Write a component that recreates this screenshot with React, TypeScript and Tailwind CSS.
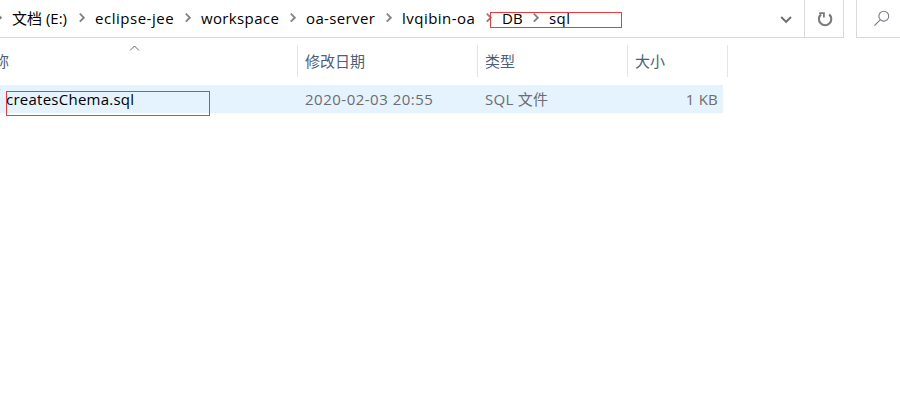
type Crumb = { label: string; box: string };

const crumbs: Crumb[] = [
  { label: '文档 (E:)', box: 'w-[56px]' },
  { label: 'eclipse-jee', box: 'w-[79px] tracking-[0.52px]' },
  { label: 'workspace', box: 'w-[78px] tracking-[0.36px]' },
  { label: 'oa-server', box: 'w-[69px] tracking-[0.36px]' },
  { label: 'lvqibin-oa', box: 'w-[73px] tracking-[0.48px]' },
  { label: 'DB', box: 'w-[20px]' },
  { label: 'sql', box: 'w-[21px] tracking-[0.4px]' },
];

function Separator() {
  return (
    <svg className="h-[38px] w-[27px] shrink-0" viewBox="0 0 27 38" fill="none" stroke="#828282" strokeWidth="1.9">
      <path d="M11.8 13.7l4 4-4 4" />
    </svg>
  );
}

function AddressBar() {
  return (
    <div className="flex h-[38px]">
      <div className="relative flex w-[805px] border-r border-b border-[#d9d9d9]">
        <svg className="h-[38px] w-[12px] shrink-0" viewBox="0 0 12 38" fill="none" stroke="#828282" strokeWidth="1.9">
          <path d="M-3.2 13.7l4 4-4 4" />
        </svg>
        {crumbs.map((c, i) => (
          <div key={c.label} className="flex shrink-0">
            {i > 0 && <Separator />}
            <span className={`shrink-0 text-[15px] leading-[36px] text-black ${c.box}`}>{c.label}</span>
          </div>
        ))}
        <div className="absolute top-[12px] left-[490px] h-[16px] w-[132px] border border-[#f03a3a]" />
        <svg className="mr-[11px] ml-auto h-[38px] w-[14px]" viewBox="0 0 14 38" fill="none" stroke="#6e6e6e" strokeWidth="2">
          <path d="M2.2 17l4.9 4.9 4.9-4.9" />
        </svg>
      </div>
      <div className="w-[39px] border-r border-b border-[#d9d9d9]">
        <svg className="h-[37px] w-[38px]" viewBox="0 0 38 37" fill="none" stroke="#7b7b7b" strokeWidth="2.1">
          <path d="M16 14.4a6.2 6.2 0 1 0 8.2 0" />
          <path d="M14.2 13.1h4.7v4.4" strokeWidth="1.8" />
        </svg>
      </div>
      <div className="ml-[12px] flex-1 border-b border-l border-[#d9d9d9]">
        <svg className="h-[37px] w-[43px]" viewBox="0 0 43 37" fill="none" stroke="#747c86" strokeWidth="1.1">
          <circle cx="26.8" cy="16.2" r="4.9" />
          <path d="M23.2 19.8l-5.8 5.8" />
        </svg>
      </div>
    </div>
  );
}

function ColumnHeaders() {
  return (
    <div className="relative mt-[7px] flex h-[32px] text-[15px] leading-[32px] text-[#4c607a]">
      <div className="w-[298px] border-r border-[#e5e5e5]">
        <span className="ml-[-6px]">称</span>
      </div>
      <div className="w-[180px] border-r border-[#e5e5e5] pl-[7px]">修改日期</div>
      <div className="w-[150px] border-r border-[#e5e5e5] pl-[7px]">类型</div>
      <div className="w-[100px] border-r border-[#e5e5e5] pl-[7px]">大小</div>
      <svg className="absolute top-0 left-[129px] h-[7px] w-[11px]" viewBox="0 0 11 7" fill="none" stroke="#6d6d6d">
        <path d="M1 5.5L5.5 1 10 5.5" />
      </svg>
    </div>
  );
}

function FileRow() {
  return (
    <div className="relative mt-[8px] flex h-[28px] w-[723px] bg-[#e5f3ff] text-[15px] leading-[28px] text-[#6d6d6d]">
      <div className="w-[305px] pl-[6px] tracking-[0.25px] text-black">createsChema.sql</div>
      <div className="w-[180px] tracking-[0.5px]">2020-02-03 20:55</div>
      <div className="w-[150px] tracking-[0.3px]">SQL 文件</div>
      <div className="flex-1 pr-[5px] text-right tracking-[0.2px]">1 KB</div>
      <div className="absolute top-[6px] left-[6px] h-[25px] w-[204px] border border-[#f03a3a]" />
      <div className="absolute top-[4px] left-0 h-px w-px bg-[#c9cdd1]" />
    </div>
  );
}

export default function App() {
  return (
    <div className="h-[416px] w-[900px] overflow-hidden bg-white font-['Open_Sans','Noto_Sans_CJK_SC',sans-serif] whitespace-nowrap">
      <AddressBar />
      <ColumnHeaders />
      <FileRow />
    </div>
  );
}
